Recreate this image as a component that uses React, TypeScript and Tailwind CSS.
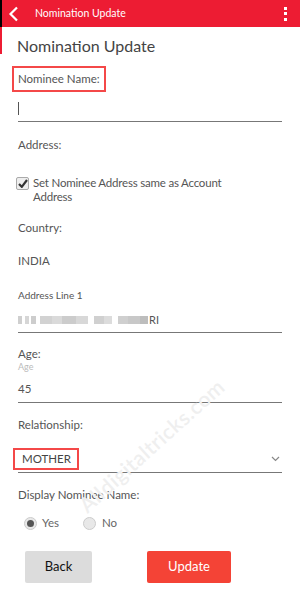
import React from 'react';

const font = { fontFamily: 'Lato, "Open Sans", sans-serif' };

function Label({ children, className = '' }: { children: React.ReactNode; className?: string }) {
  return <div className={`text-[11.5px] leading-[16px] text-[#555] ${className}`}>{children}</div>;
}

// pixelated (masked) address text
const blocks: [number, string][] = [
  [4, '#cfcfcf'], [3, '#fff'], [4, '#d6d6d6'], [2, '#fff'], [5, '#cdcdcd'], [4, '#fff'],
  [12, '#d2d2d2'], [10, '#dadada'], [14, '#cccccc'], [12, '#d8d8d8'], [6, '#fff'],
  [10, '#d0d0d0'], [8, '#dcdcdc'], [6, '#fff'], [10, '#cfcfcf'], [12, '#c8c8c8'], [8, '#bdbdbd'],
];

export default function App() {
  return (
    <div className="relative w-[300px] h-[593px] overflow-hidden bg-white" style={font}>
      {/* Header */}
      <div className="flex h-[27px] items-center bg-[#ed1c33] border-l-2 border-black">
        <svg width="12" height="16" viewBox="0 0 12 16" className="ml-[6px]">
          <path d="M9 1.5 L2.5 8 L9 14.5" stroke="white" strokeWidth="2.2" fill="none" />
        </svg>
        <span className="ml-[15px] text-[10.5px] text-white">Nomination Update</span>
        <div className="ml-auto mr-[13px] flex flex-col gap-[2.5px]">
          <span className="block h-[3px] w-[3px] bg-white" />
          <span className="block h-[3px] w-[3px] bg-white" />
          <span className="block h-[3px] w-[3px] bg-white" />
        </div>
      </div>

      <div className="border-l-2 border-[#ed1c33] h-[27px]">
        <h1 className="pl-[15px] pt-[9px] text-[16px] leading-[20px] text-[#444]">Nomination Update</h1>
      </div>

      <div className="px-[18px]">
        {/* Nominee name */}
        <div className="mt-[12px] -ml-[6px] w-fit border-[2px] border-[#f44848] px-[4px] py-[3px]">
          <Label>Nominee Name:</Label>
        </div>
        <div className="h-[30px] pt-[10px] border-b border-[#777]">
          <span className="block h-[13px] w-px bg-[#555]" />
        </div>

        <Label className="mt-[15px]">Address:</Label>

        <div className="mt-[23px] -ml-[2px] flex items-start gap-[4px]">
          <div className="mt-[1px] flex h-[13px] w-[13px] items-center justify-center border border-[#aaa] bg-[#eee] rounded-[2px]">
            <svg width="10" height="9" viewBox="0 0 10 9">
              <path d="M1 5 L3.8 7.8 L9 1" stroke="#333" strokeWidth="2.2" fill="none" />
            </svg>
          </div>
          <div className="text-[11.5px] leading-[14px] tracking-[-0.2px] text-[#555]">
            Set Nominee Address same as Account
            <br />
            Address
          </div>
        </div>

        <Label className="mt-[16px]">Country:</Label>
        <Label className="mt-[17px]">INDIA</Label>

        <div className="mt-[19px] text-[10px] leading-[14px] text-[#555]">Address Line 1</div>
        <div className="mt-[11px] h-[20px] border-b border-[#777] flex items-start">
          <div className="mt-[3px] flex h-[8px]">
            {blocks.map(([w, c], i) => (
              <span key={i} className="block h-full" style={{ width: w, background: c }} />
            ))}
          </div>
          <span className="ml-[1px] text-[11px] leading-[14px] text-[#555]">RI</span>
        </div>

        <Label className="mt-[13px]">Age:</Label>
        <div className="-mt-[1px] text-[9px] leading-[12px] text-[#bbb]">Age</div>
        <div className="h-[30px] border-b border-[#777] pt-[8px]">
          <Label>45</Label>
        </div>

        <Label className="mt-[14px]">Relationship:</Label>
        <div className="mt-[15px] flex h-[25px] items-start border-b border-[#777]">
          <div className="-ml-[5px] border-[2px] border-[#f44848] w-[66px] h-[22px] flex items-center pl-[7px]">
            <span className="text-[11.5px] text-[#444]">MOTHER</span>
          </div>
          <svg width="9" height="6" viewBox="0 0 9 6" className="ml-auto mt-[8px] mr-[2px]">
            <path d="M1 1 L4.5 4.5 L8 1" stroke="#888" strokeWidth="1.2" fill="none" />
          </svg>
        </div>

        <Label className="mt-[14px]">Display Nominee Name:</Label>

        <div className="mt-[12px] ml-[6px] flex h-[16px] items-center text-[11.5px] text-[#666]">
          <div className="flex h-[13px] w-[13px] items-center justify-center rounded-full border border-[#ccc] bg-[#e8e8e8]">
            <span className="block h-[7px] w-[7px] rounded-full bg-[#555]" />
          </div>
          <span className="ml-[5px]">Yes</span>
          <div className="ml-[24px] h-[13px] w-[13px] rounded-full border border-[#ccc] bg-[#e8e8e8]" />
          <span className="ml-[6px]">No</span>
        </div>

        <div className="mt-[20px] flex">
          <button className="ml-[7px] h-[32px] w-[67px] rounded-[2px] bg-[#dcdcdc] text-[13px] text-[#111]">Back</button>
          <button className="ml-[55px] h-[32px] w-[84px] rounded-[2px] bg-[#f44336] text-[13px] text-white">Update</button>
        </div>
      </div>

      {/* Watermark */}
      <div className="pointer-events-none absolute left-[82px] top-[492px] -rotate-[42deg] origin-left text-[21px] font-semibold tracking-wide text-[#efefef] select-none">
        Alldigitaltricks.com
      </div>
    </div>
  );
}
